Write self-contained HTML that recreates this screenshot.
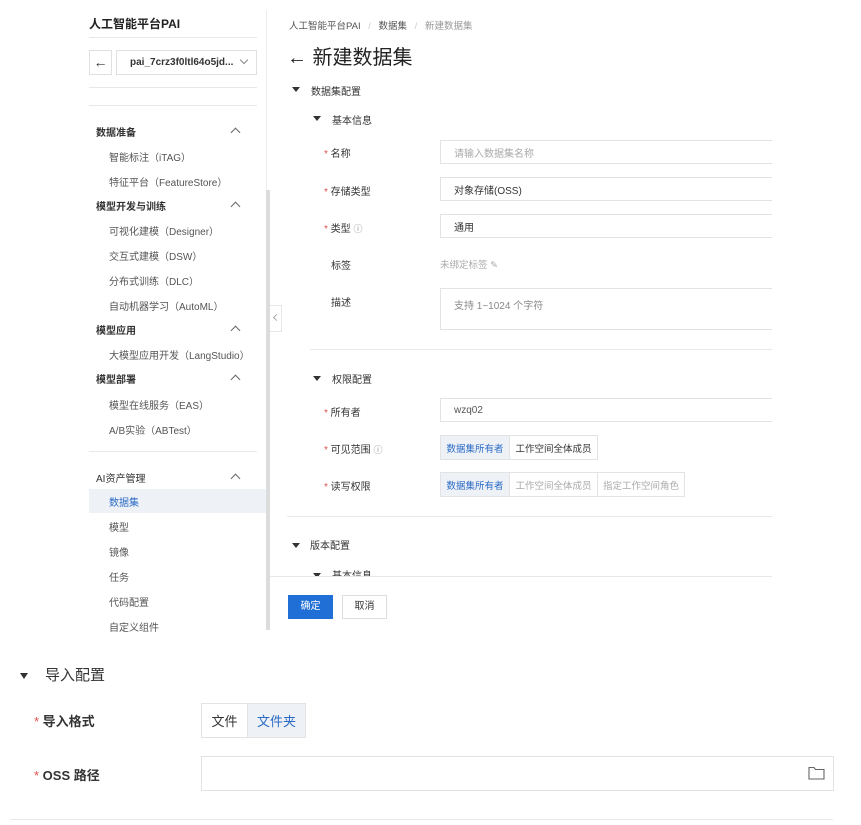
<!DOCTYPE html>
<html><head><meta charset="utf-8"><style>
*{box-sizing:border-box;margin:0;padding:0}
body{width:861px;height:825px;background:#fff;font-family:"Liberation Sans","Noto Sans CJK SC",sans-serif;color:#333;position:relative;overflow:hidden}
.a{position:absolute;white-space:nowrap}
.s{font-size:10px;color:#333}
.g{font-size:10px;color:#555}
.h{font-size:10px;font-weight:bold;color:#333}
.chev{position:absolute;width:7px;height:7px;border-left:1.2px solid #666;border-top:1.2px solid #666;transform:rotate(45deg)}
.tri{position:absolute;width:0;height:0;border-left:4px solid transparent;border-right:4px solid transparent;border-top:5px solid #333}
.inp{position:absolute;border:1px solid #e3e3e3;border-right:none;background:#fff;font-size:10px;padding-left:13px;display:flex;align-items:center}
.st{color:#d9534f}
.line{position:absolute;height:1px;background:#e8e8e8}
.seg{position:absolute;display:flex;border:1px solid #e3e3e3;height:25px;font-size:9.5px}
.seg div{display:flex;align-items:center;justify-content:center;border-right:1px solid #e3e3e3}
.seg div:last-child{border-right:none}
</style></head><body>
<!-- sidebar -->
<div class="a" style="left:89px;top:15px;font-size:12px;font-weight:bold;color:#222">人工智能平台PAI</div>
<div class="line" style="left:89px;top:37px;width:168px"></div>
<div class="a" style="left:89px;top:50px;width:23px;height:25px;border:1px solid #e0e0e0;font-size:14px;text-align:center;line-height:22px">←</div>
<div class="a" style="left:116px;top:50px;width:141px;height:25px;border:1px solid #e0e0e0;font-size:10px;font-weight:bold;padding-left:13px;line-height:23px">pai_7crz3f0ltl64o5jd...</div>
<div class="chev" style="left:241px;top:57px;width:6px;height:6px;border-color:#888;border-width:1px;transform:rotate(225deg)"></div>
<div class="line" style="left:89px;top:87px;width:168px"></div>
<div class="line" style="left:89px;top:105px;width:168px"></div>
<div class="a h" style="left:96px;top:124px">数据准备</div><div class="chev" style="left:232px;top:129px"></div>
<div class="a g" style="left:109px;top:149px">智能标注（iTAG）</div>
<div class="a g" style="left:109px;top:174px">特征平台（FeatureStore）</div>
<div class="a h" style="left:96px;top:198px">模型开发与训练</div><div class="chev" style="left:232px;top:203px"></div>
<div class="a g" style="left:109px;top:223px">可视化建模（Designer）</div>
<div class="a g" style="left:109px;top:248px">交互式建模（DSW）</div>
<div class="a g" style="left:109px;top:273px">分布式训练（DLC）</div>
<div class="a g" style="left:109px;top:298px">自动机器学习（AutoML）</div>
<div class="a h" style="left:96px;top:322px">模型应用</div><div class="chev" style="left:232px;top:327px"></div>
<div class="a g" style="left:109px;top:347px">大模型应用开发（LangStudio）</div>
<div class="a h" style="left:96px;top:371px">模型部署</div><div class="chev" style="left:232px;top:376px"></div>
<div class="a g" style="left:109px;top:397px">模型在线服务（EAS）</div>
<div class="a g" style="left:109px;top:422px">A/B实验（ABTest）</div>
<div class="line" style="left:89px;top:451px;width:168px"></div>
<div class="a" style="left:96px;top:470px;font-size:10px;color:#333">AI资产管理</div><div class="chev" style="left:232px;top:475px"></div>
<div class="a" style="left:89px;top:489px;width:177px;height:24px;background:#eef1f6"></div>
<div class="a" style="left:109px;top:494px;font-size:10px;color:#2a6bc6">数据集</div>
<div class="a g" style="left:109px;top:519px">模型</div>
<div class="a g" style="left:109px;top:544px">镜像</div>
<div class="a g" style="left:109px;top:569px">任务</div>
<div class="a g" style="left:109px;top:594px">代码配置</div>
<div class="a g" style="left:109px;top:619px">自定义组件</div>
<div class="a" style="left:266px;top:10px;width:1px;height:620px;background:#eee"></div>
<div class="a" style="left:266px;top:190px;width:4px;height:440px;background:#dcdcdc"></div>
<div class="a" style="left:270px;top:305px;width:12px;height:27px;border:1px solid #e6e6e6;border-left:none;background:#fff"></div>
<div class="chev" style="left:274px;top:315px;width:5px;height:5px;transform:rotate(-45deg);border-color:#aaa"></div>
<!-- main -->
<div class="a" style="left:289px;top:18px;font-size:9.5px;color:#555">人工智能平台PAI <span style="color:#ccc;margin:0 5px">/</span> 数据集 <span style="color:#ccc;margin:0 5px">/</span> <span style="color:#999">新建数据集</span></div>
<div class="a" style="left:287px;top:41px;font-size:20px;color:#222">← 新建数据集</div>
<div class="tri" style="left:292px;top:87px"></div><div class="a s" style="left:311px;top:83px">数据集配置</div>
<div class="tri" style="left:313px;top:116px"></div><div class="a s" style="left:332px;top:112px">基本信息</div>
<div class="a s" style="left:324px;top:145px"><span class="st">* </span>名称</div>
<div class="inp" style="left:440px;top:140px;width:332px;height:24px;color:#aaa">请输入数据集名称</div>
<div class="a s" style="left:324px;top:183px"><span class="st">* </span>存储类型</div>
<div class="inp" style="left:440px;top:177px;width:332px;height:24px">对象存储(OSS)</div>
<div class="a s" style="left:324px;top:220px"><span class="st">* </span>类型 <span style="color:#888;font-size:9px">ⓘ</span></div>
<div class="inp" style="left:440px;top:214px;width:332px;height:24px">通用</div>
<div class="a s" style="left:331px;top:257px">标签</div>
<div class="a" style="left:440px;top:257px;font-size:9.5px;color:#aaa">未绑定标签 ✎</div>
<div class="a s" style="left:331px;top:294px">描述</div>
<div class="inp" style="left:440px;top:288px;width:332px;height:42px;align-items:flex-start;padding-top:8px;color:#888">支持 1~1024 个字符</div>
<div class="line" style="left:310px;top:349px;width:462px"></div>
<div class="tri" style="left:313px;top:376px"></div><div class="a s" style="left:332px;top:371px">权限配置</div>
<div class="a s" style="left:324px;top:404px"><span class="st">* </span>所有者</div>
<div class="inp" style="left:440px;top:398px;width:332px;height:24px;color:#555">wzq02</div>
<div class="a s" style="left:324px;top:441px"><span class="st">* </span>可见范围 <span style="color:#888;font-size:9px">ⓘ</span></div>
<div class="seg" style="left:440px;top:435px"><div style="width:69px;background:#eef1f6;color:#2a6bc6">数据集所有者</div><div style="width:87px">工作空间全体成员</div></div>
<div class="a s" style="left:324px;top:478px"><span class="st">* </span>读写权限</div>
<div class="seg" style="left:440px;top:472px"><div style="width:69px;background:#eef1f6;color:#2a6bc6">数据集所有者</div><div style="width:88px;color:#aaa">工作空间全体成员</div><div style="width:86px;color:#aaa">指定工作空间角色</div></div>
<div class="line" style="left:287px;top:516px;width:485px"></div>
<div class="tri" style="left:292px;top:543px"></div><div class="a s" style="left:310px;top:537px">版本配置</div>
<div class="a" style="left:313px;top:566px;width:80px;height:10px;overflow:hidden"><div class="tri" style="left:0;top:7px"></div><div class="a s" style="left:19px;top:1px">基本信息</div></div>
<div class="line" style="left:270px;top:576px;width:502px"></div>
<div class="a" style="left:288px;top:595px;width:45px;height:24px;background:#1f6fd6;color:#fff;font-size:10px;text-align:center;line-height:24px">确定</div>
<div class="a" style="left:342px;top:595px;width:45px;height:24px;border:1px solid #ddd;font-size:10px;text-align:center;line-height:22px">取消</div>
<!-- bottom -->
<div class="tri" style="left:20px;top:673px;border-left-width:4.5px;border-right-width:4.5px;border-top-width:6px"></div>
<div class="a" style="left:45px;top:664px;font-size:15px;color:#333">导入配置</div>
<div class="a" style="left:34px;top:711px;font-size:13px;font-weight:bold;color:#333"><span class="st" style="font-weight:normal">* </span>导入格式</div>
<div class="seg" style="left:201px;top:703px;height:35px;font-size:13px"><div style="width:46px">文件</div><div style="width:57px;background:#eef1f6;color:#2a6bc6">文件夹</div></div>
<div class="a" style="left:34px;top:765px;font-size:13px;font-weight:bold;color:#333"><span class="st" style="font-weight:normal">* </span>OSS 路径</div>
<div class="a" style="left:201px;top:756px;width:633px;height:35px;border:1px solid #e3e3e3"></div>
<svg class="a" style="left:808px;top:766px" width="17" height="14" viewBox="0 0 17 14"><path d="M1 1.5h5l1.5 2H16v9.5H1z" fill="none" stroke="#666" stroke-width="1.1"/></svg>
<div class="line" style="left:10px;top:819px;width:823px"></div>
</body></html>
